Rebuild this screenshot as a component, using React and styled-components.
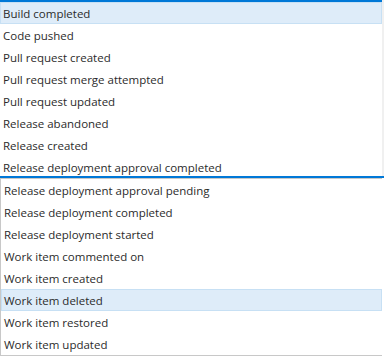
import React from 'react';
import styled, { createGlobalStyle } from 'styled-components';

const GlobalStyle = createGlobalStyle`
  html, body {
    margin: 0;
    padding: 0;
    background: #ffffff;
  }
  body {
    font-family: 'Segoe UI', 'Open Sans', sans-serif;
    font-size: 11.5px;
    color: #2b2b2b;
  }
`;

const Page = styled.div`
  width: 384px;
  height: 356px;
  display: flex;
  flex-direction: column;
  overflow: hidden;
`;

const Dropdown = styled.div`
  display: flex;
  width: 384px;
  height: 178px;
  box-sizing: border-box;
  border-top: 2px solid #0078d7;
  border-bottom: 2px solid #0078d7;
`;

const Options = styled.ul`
  flex: 1;
  margin: 0;
  padding: 0;
  list-style: none;
  overflow: hidden;
`;

const Track = styled.div`
  width: 2px;
  margin-top: -2px;
  background: #f0f0f0;
`;

const EventList = styled.ul`
  width: 382px;
  margin: 0;
  padding: 0;
  list-style: none;
  box-sizing: border-box;
  border-top: 1px solid #c8c8c8;
  border-left: 1px solid #c8c8c8;
  border-bottom: 1px solid #c8c8c8;
`;

const Item = styled.li`
  height: 22px;
  line-height: 22px;
  box-sizing: border-box;
  padding: 0 2px;
  border: 1px solid ${p => (p.$selected ? '#c7e0f4' : 'transparent')};
  background: ${p => (p.$selected ? '#deecf9' : 'transparent')};
  white-space: nowrap;
  overflow: hidden;
`;

const topItems = [
  'Build completed',
  'Code pushed',
  'Pull request created',
  'Pull request merge attempted',
  'Pull request updated',
  'Release abandoned',
  'Release created',
  'Release deployment approval completed',
];

const bottomItems = [
  'Release deployment approval pending',
  'Release deployment completed',
  'Release deployment started',
  'Work item commented on',
  'Work item created',
  'Work item deleted',
  'Work item restored',
  'Work item updated',
];

const App = () => (
  <Page>
    <GlobalStyle />
    <Dropdown>
      <Options>
        {topItems.map(name => (
          <Item key={name} $selected={name === 'Build completed'}>
            {name}
          </Item>
        ))}
      </Options>
      <Track />
    </Dropdown>
    <EventList>
      {bottomItems.map(name => (
        <Item key={name} $selected={name === 'Work item deleted'}>
          {name}
        </Item>
      ))}
    </EventList>
  </Page>
);

export default App;
